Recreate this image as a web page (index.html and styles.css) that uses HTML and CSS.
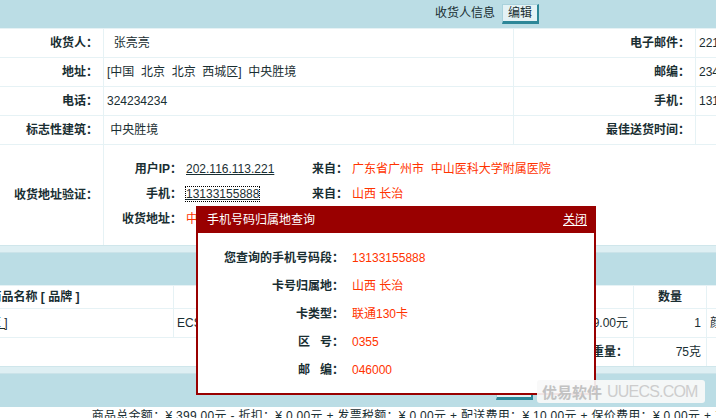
FILE: index.html
```html
<!DOCTYPE html>
<html lang="zh-CN">
<head>
    <meta charset="UTF-8">
    <title>订单信息</title>
    <link rel="stylesheet" href="styles.css">
</head>
<body>
    <div class="page">
        <table class="info">
            <colgroup><col style="width:208px"><col style="width:410px"><col style="width:182px"><col></colgroup>
            <tr><th colspan="4" class="bar">收货人信息<button class="btn">编辑</button></th></tr>
            <tr>
                <td class="lbl">收货人：</td><td>&nbsp;&nbsp;张亮亮</td>
                <td class="lbl">电子邮件：</td><td>2213412@qq.com</td>
            </tr>
            <tr>
                <td class="lbl">地址：</td><td>[中国&nbsp; 北京&nbsp; 北京&nbsp; 西城区]&nbsp; 中央胜境</td>
                <td class="lbl">邮编：</td><td>234234</td>
            </tr>
            <tr>
                <td class="lbl">电话：</td><td>324234234</td>
                <td class="lbl">手机：</td><td>13133155888</td>
            </tr>
            <tr>
                <td class="lbl">标志性建筑：</td><td>&nbsp;中央胜境</td>
                <td class="lbl">最佳送货时间：</td><td></td>
            </tr>
            <tr>
                <td class="lbl">收货地址验证：</td>
                <td colspan="3" class="check-cell">
                    <div class="check">
                        <b>用户IP：</b><span><a href="#">202.116.113.221</a></span>
                        <b>来自：</b><span class="red">广东省广州市&nbsp; 中山医科大学附属医院</span>
                        <b>手机：</b><span><a href="#" class="focused">13133155888</a></span>
                        <b>来自：</b><span class="red">山西 长治</span>
                        <b>收货地址：</b><span class="red">中国 北京</span>
                        <b></b><span></span>
                    </div>
                </td>
            </tr>
        </table>

        <div class="gap"></div>

        <table class="goods">
            <colgroup><col style="width:278px"><col style="width:150px"><col style="width:140px"><col style="width:170px"><col style="width:73px"><col style="width:150px"><col style="width:100px"><col></colgroup>
            <tr><th colspan="8" class="bar goods-bar">商品信息<button class="btn">编辑</button></th></tr>
            <tr class="head">
                <th>商品名称 [ 品牌 ]</th><th></th><th></th><th></th><th>数量</th><th>属性</th><th>库存</th><th>小计</th>
            </tr>
            <tr>
                <td class="name"><a href="#">诺基亚N85 [ 诺基亚 ]</a></td>
                <td>ECS000032</td><td></td>
                <td class="num">¥399.00元</td>
                <td class="num">1</td>
                <td>颜色:黑色</td>
                <td class="num">1</td>
                <td class="num">¥399.00元</td>
            </tr>
            <tr>
                <td colspan="4" class="num"><b>商品总重量：</b></td>
                <td class="num">75克</td>
                <td colspan="3"></td>
            </tr>
        </table>

        <div class="gap"></div>

        <table class="fees">
            <tr><th class="bar fees-bar">费用信息<button class="btn">编辑</button></th></tr>
            <tr>
                <td class="total">商品总金额：¥ 399.00元 - 折扣：¥ 0.00元 + 发票税额：¥ 0.00元 + 配送费用：¥ 10.00元 + 保价费用：¥ 0.00元 + 支付费用：¥ 0.00元 + 包装费用：¥ 0.00元 + 贺卡费用：¥ 0.00元</td>
            </tr>
        </table>
    </div>

    <div class="popup">
        <div class="popup-head">
            <span>手机号码归属地查询</span>
            <a href="#">关闭</a>
        </div>
        <dl class="popup-body">
            <dt>您查询的手机号码段：</dt><dd>13133155888</dd>
            <dt>卡号归属地：</dt><dd>山西 长治</dd>
            <dt>卡类型：</dt><dd>联通130卡</dd>
            <dt>区&nbsp;&nbsp;&nbsp;号：</dt><dd>0355</dd>
            <dt>邮&nbsp;&nbsp;&nbsp;编：</dt><dd>046000</dd>
        </dl>
    </div>

    <div class="mark"><b>优易软件</b><span>UUECS.COM</span></div>
</body>
</html>
```

FILE: styles.css
```css
html, body {
    overflow: hidden;
}
body {
    margin: 0;
    width: 716px;
    height: 418px;
    position: relative;
    font: 12px/18px "Liberation Sans", "Noto Sans CJK SC", sans-serif;
    color: #192e32;
    background: #fff;
}
a {
    color: #192e32;
}
.page {
    width: 1184px;
    margin-left: -105px;
}
table {
    width: 100%;
    border-collapse: collapse;
    table-layout: fixed;
}
td, th {
    border: 1px solid #e6f2f5;
    padding: 5px 3px;
    line-height: 18px;
    white-space: nowrap;
    overflow: hidden;
}
th.bar {
    background: #bbdde5;
    border: none;
    font-weight: normal;
    text-align: center;
    padding: 4px;
    line-height: 19px;
}
.goods-bar {
    padding: 6px 4px !important;
}
.fees-bar {
    padding: 6px 4px 7px !important;
}
.btn {
    font: inherit;
    color: #192e32;
    margin-left: 7px;
    padding: 0 5px;
    height: 20px;
    line-height: 16px;
    background: #e4f2f5;
    border: 1px solid #a9d2dc;
    border-right: 2px solid #2d8798;
    border-bottom: 3px solid #2d8798;
    vertical-align: middle;
}
.lbl {
    text-align: right;
    font-weight: bold;
    padding-right: 5px;
}
.check-cell {
    padding: 0 4px;
}
.check {
    display: grid;
    grid-template-columns: 74px 120px 38px auto;
    column-gap: 4px;
    row-gap: 7px;
    padding: 15px 0 17px;
}
.check b {
    text-align: right;
}
.focused {
    outline: 1px dotted #000;
    outline-offset: 0;
}
.red {
    color: #ff3300;
}
.gap {
    height: 6px;
    background: #deeff3;
    border-top: 1px solid #cfe6eb;
    border-bottom: 1px solid #cbe3e9;
    margin-top: -1px;
}
.goods .head th {
    padding: 2px 4px;
}
.goods .name {
    padding-left: 1px;
}
.num {
    text-align: right;
}
.num, .lbl {
    padding-right: 5px;
}
.total {
    text-align: right;
    padding: 0 8px 0 5px;
    border: none;
    letter-spacing: 0.3px;
}

.popup {
    position: absolute;
    left: 196px;
    top: 206px;
    width: 400px;
    box-sizing: border-box;
    border: 2px solid #990000;
    background: #fff;
}
.popup-head {
    display: flex;
    justify-content: space-between;
    height: 25px;
    line-height: 25px;
    padding: 0 7px 0 9px;
    background: #990000;
    color: #fff;
}
.popup-head a {
    color: #fff;
}
.popup-body {
    display: grid;
    grid-template-columns: 146px 1fr;
    column-gap: 8px;
    row-gap: 10px;
    margin: 0;
    padding: 16px 0 14px;
}
.popup-body dt {
    text-align: right;
    font-weight: bold;
}
.popup-body dd {
    margin: 0;
    color: #ff3300;
}

.mark {
    position: absolute;
    left: 537px;
    top: 380px;
    width: 168px;
    height: 23px;
    box-sizing: border-box;
    padding-left: 5px;
    display: flex;
    align-items: center;
    gap: 5px;
    white-space: nowrap;
    background: rgba(248, 248, 248, 0.92);
    border-radius: 3px;
}
.mark b {
    font: bold 15px/20px "Noto Sans CJK SC", sans-serif;
    color: #c2c2c2;
}
.mark span {
    font: 16px/20px "Liberation Sans", sans-serif;
    letter-spacing: -0.8px;
    color: #cdcdcd;
}
```
